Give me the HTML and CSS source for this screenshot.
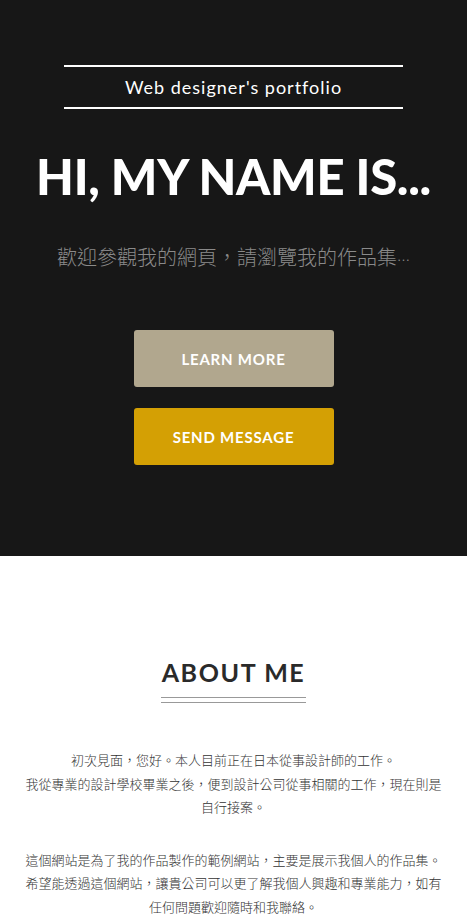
FILE: index.html
```html
<!DOCTYPE html>
<html lang="zh-Hant">
<head>
<meta charset="utf-8">
<link rel="stylesheet" href="styles.css">
</head>
<body>
<header class="hero">
  <div class="tagline">Web designer's portfolio</div>
  <h1 class="title">HI, MY NAME IS...</h1>
  <p class="subtitle">歡迎參觀我的網頁，請瀏覽我的作品集<span class="ell">…</span></p>
  <div class="actions">
    <a class="btn btn-learn" href="#">LEARN MORE</a>
    <a class="btn btn-send" href="#">SEND MESSAGE</a>
  </div>
</header>
<section class="about">
  <h2 class="about-title">ABOUT ME</h2>
  <div class="about-rule"></div>
  <p class="about-text">初次見面，您好。本人目前正在日本從事設計師的工作。<br>我從專業的設計學校畢業之後，便到設計公司從事相關的工作，現在則是自行接案。</p>
  <p class="about-text">這個網站是為了我的作品製作的範例網站，主要是展示我個人的作品集。<br>希望能透過這個網站，讓貴公司可以更了解我個人興趣和專業能力，如有任何問題歡迎隨時和我聯絡。</p>
</section>
</body>
</html>
```
FILE: styles.css
```css
* { box-sizing: border-box; }
html, body { margin: 0; padding: 0; }
body {
  font-family: "Lato", "Noto Sans CJK TC", sans-serif;
  background: #fff;
}
.hero {
  background: #171717;
  height: 556px;
  padding-top: 65px;
  display: flex;
  flex-direction: column;
  align-items: center;
}
.tagline {
  width: 339px;
  border-top: 2px solid #fff;
  border-bottom: 2px solid #fff;
  height: 44px;
  display: flex;
  align-items: center;
  justify-content: center;
  color: #fff;
  font-size: 18px;
  letter-spacing: 1px;
}
.title {
  margin: 39px 0 0;
  color: #fff;
  font-size: 49px;
  font-weight: 900;
  line-height: 56px;
  letter-spacing: -0.3px;
}
.subtitle {
  margin: 39px 0 0;
  color: #8a8a8a;
  font-size: 20px;
  line-height: 28px;
  font-family: "Noto Sans CJK TC", sans-serif;
  font-weight: 300;
}
.ell { font-size: 13px; }
.actions {
  margin-top: 56px;
  display: flex;
  flex-direction: column;
  gap: 21px;
}
.btn {
  width: 200px;
  height: 57px;
  border-radius: 3px;
  display: flex;
  align-items: center;
  justify-content: center;
  color: #fff;
  text-decoration: none;
  font-weight: 700;
  font-size: 15px;
  letter-spacing: 0.8px;
}
.btn-learn { background: #b1a78e; }
.btn-send { background: #d4a004; }
.about {
  padding: 100px 20px 0;
  display: flex;
  flex-direction: column;
  align-items: center;
}
.about-title {
  margin: 0;
  font-size: 25px;
  font-weight: 700;
  letter-spacing: 1.6px;
  color: #2a2a2a;
  line-height: 32px;
}
.about-rule {
  width: 145px;
  height: 6px;
  border-top: 1px solid #999;
  border-bottom: 1px solid #999;
  margin-top: 9px;
}
.about-text {
  margin: 45px 0 0;
  text-align: center;
  font-family: "Noto Sans CJK TC", sans-serif;
  font-weight: 300;
  font-size: 13px;
  line-height: 23.5px;
  color: #333;
}
.about-text + .about-text { margin-top: 29px; }
```
